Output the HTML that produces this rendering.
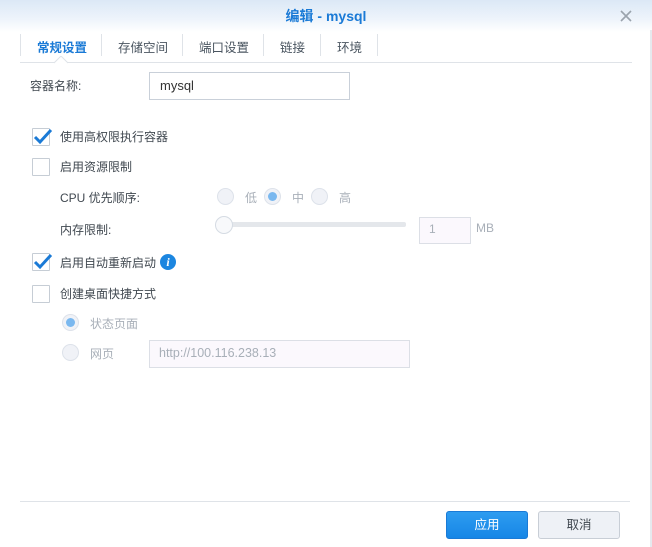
<!DOCTYPE html>
<html><head><meta charset="utf-8"><style>
*{margin:0;padding:0;box-sizing:border-box}
body{width:652px;height:547px;overflow:hidden;background:#fff;font-family:"Liberation Sans","Noto Sans CJK SC",sans-serif;font-size:12px;color:#404850;position:relative}
.hdr{position:absolute;left:0;top:0;width:652px;height:32px;background:linear-gradient(#dbe8f6,#eef4fb 60%,#fff)}
.a{position:absolute;white-space:nowrap}
.t{margin-top:-1px}
.title{left:0;width:652px;text-align:center;top:6px;font-size:14px;font-weight:bold;color:#1a7ad6}
.tabline{position:absolute;left:20px;top:62px;width:612px;height:1px;background:#dfe3e8}
.sep{position:absolute;top:34px;width:1px;height:22px;background:#dfe3e8}
.tab{top:37px;font-size:12.5px;color:#4a5560}
.cb{position:absolute;width:18px;height:18px;border:1px solid #c6cdd5;background:#fff;border-radius:1px}
.rd{position:absolute;width:17px;height:17px;border-radius:50%;border:1px solid #dde2ea;background:#f0f2f7}
.rd.on::after{content:"";position:absolute;left:3px;top:3px;width:9px;height:9px;border-radius:50%;background:#7ab8ef}
.inp{position:absolute;border:1px solid #c9d0d9;background:#fff}
.dis{border-color:#dcdfe6;background:#fbf8fd}
.gray{color:#a8afb8}
.btn{position:absolute;top:511px;height:28px;width:82px;border-radius:3px;text-align:center;line-height:27px;font-size:12.5px}
</style></head><body>
<div class="hdr"></div>
<div class="a title">编辑 - mysql</div>
<svg class="a" style="left:619px;top:9px" width="14" height="14"><path d="M2 2L12 12M12 2L2 12" stroke="#9aa3ad" stroke-width="1.6"/></svg>
<div style="position:absolute;left:650px;top:30px;width:2px;height:517px;background:#e6e9ee"></div>
<div class="sep" style="left:20px"></div>
<div class="sep" style="left:101px"></div>
<div class="sep" style="left:182px"></div>
<div class="sep" style="left:263px"></div>
<div class="sep" style="left:320px"></div>
<div class="sep" style="left:377px"></div>
<div class="a tab" style="left:37px;color:#1a7ad6;font-weight:bold">常规设置</div>
<div class="a tab" style="left:118px">存储空间</div>
<div class="a tab" style="left:199px">端口设置</div>
<div class="a tab" style="left:280px">链接</div>
<div class="a tab" style="left:337px">环境</div>
<div class="tabline"></div>
<svg class="a" style="left:54px;top:56px" width="16" height="8"><path d="M0 7L7 0L14 7" fill="#fff" stroke="#dfe3e8"/></svg>

<div class="a t" style="left:30px;top:78px">容器名称:</div>
<div class="inp" style="left:149px;top:72px;width:201px;height:28px"></div>
<div class="a t" style="left:160px;top:79px;font-size:13px;color:#333">mysql</div>

<div class="cb" style="left:32px;top:128px"></div>
<svg class="a" style="left:33px;top:128px" width="20" height="18"><path d="M2 9L7 14L18 2" stroke="#1a7ad6" stroke-width="3" fill="none"/></svg>
<div class="a t" style="left:60px;top:129px">使用高权限执行容器</div>

<div class="cb" style="left:32px;top:158px"></div>
<div class="a t" style="left:60px;top:159px">启用资源限制</div>

<div class="a t" style="left:60px;top:190px">CPU 优先顺序:</div>
<div class="rd" style="left:217px;top:188px"></div>
<div class="a gray t" style="left:245px;top:190px">低</div>
<div class="rd on" style="left:264px;top:188px"></div>
<div class="a gray t" style="left:292px;top:190px">中</div>
<div class="rd" style="left:311px;top:188px"></div>
<div class="a gray t" style="left:339px;top:190px">高</div>

<div class="a t" style="left:60px;top:222px">内存限制:</div>
<div style="position:absolute;left:224px;top:222px;width:182px;height:5px;background:#e4e7eb;border-radius:2px"></div>
<div class="rd" style="left:215px;top:216px;width:18px;height:18px;background:#f8f9fb;border-color:#d5dbe3"></div>
<div class="inp dis" style="left:419px;top:217px;width:52px;height:27px"></div>
<div class="a gray t" style="left:429px;top:223px">1</div>
<div class="a gray t" style="left:476px;top:222px">MB</div>

<div class="cb" style="left:32px;top:253px"></div>
<svg class="a" style="left:33px;top:253px" width="20" height="18"><path d="M2 9L7 14L18 2" stroke="#1a7ad6" stroke-width="3" fill="none"/></svg>
<div class="a t" style="left:60px;top:255px">启用自动重新启动</div>
<div class="a" style="left:160px;top:254px;width:16px;height:16px;border-radius:50%;background:#1c86e0;color:#fff;font:italic bold 12px 'Liberation Serif',serif;text-align:center;line-height:16px">i</div>

<div class="cb" style="left:32px;top:285px"></div>
<div class="a t" style="left:60px;top:286px">创建桌面快捷方式</div>

<div class="rd on" style="left:62px;top:314px"></div>
<div class="a gray t" style="left:90px;top:316px">状态页面</div>
<div class="rd" style="left:62px;top:344px"></div>
<div class="a gray t" style="left:90px;top:346px">网页</div>
<div class="inp dis" style="left:149px;top:340px;width:261px;height:28px"></div>
<div class="a gray t" style="left:159px;top:347px;font-size:12.5px">http://100.116.238.13</div>

<div style="position:absolute;left:20px;top:501px;width:610px;height:1px;background:#dfe3e8"></div>
<div class="btn" style="left:446px;background:linear-gradient(#2e9cf0,#1686e6);border:1px solid #1a7ad6;color:#fff">应用</div>
<div class="btn" style="left:538px;background:#eef1f6;border:1px solid #c8ced6;color:#404850">取消</div>
</body></html>
